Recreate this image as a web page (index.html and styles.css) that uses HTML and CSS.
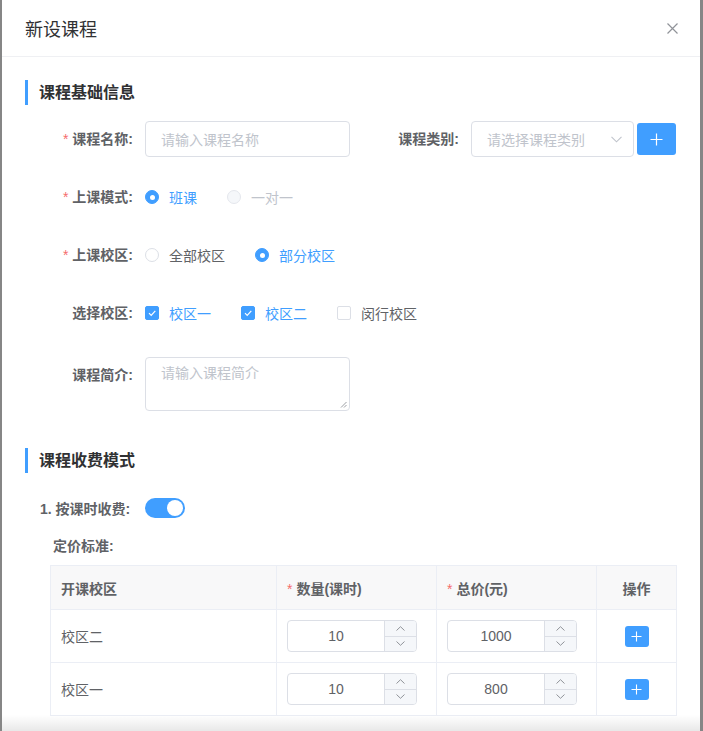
FILE: index.html
```html
<!DOCTYPE html>
<html lang="zh-CN">
<head>
<meta charset="utf-8">
<title>新设课程</title>
<link rel="stylesheet" href="styles.css">
</head>
<body>
<div class="dialog">
  <div class="dialog-header">
    <span class="dialog-title">新设课程</span>
    <span class="close">
      <svg width="11" height="11" viewBox="0 0 11 11"><path d="M0.5 0.5L10.5 10.5M10.5 0.5L0.5 10.5" stroke="#909399" stroke-width="1.2" fill="none"/></svg>
    </span>
  </div>
  <div class="dialog-body">
    <div class="section-title">课程基础信息</div>

    <div class="form-item">
      <label class="form-label required">课程名称:</label>
      <div class="input"><span class="placeholder">请输入课程名称</span></div>
      <label class="form-label form-label--second">课程类别:</label>
      <div class="select">
        <span class="placeholder">请选择课程类别</span>
        <svg class="select-arrow" width="11" height="7" viewBox="0 0 11 7"><path d="M0.5 0.8L5.5 5.8L10.5 0.8" stroke="#C0C4CC" stroke-width="1.1" fill="none"/></svg>
      </div>
      <span class="btn-add">
        <svg width="13" height="13" viewBox="0 0 13 13"><path d="M6.5 0.5V12.5M0.5 6.5H12.5" stroke="#fff" stroke-width="1.2"/></svg>
      </span>
    </div>

    <div class="form-item">
      <label class="form-label required">上课模式:</label>
      <span class="radio is-checked"><span class="radio-dot"></span><span class="radio-text">班课</span></span>
      <span class="radio is-disabled"><span class="radio-dot"></span><span class="radio-text">一对一</span></span>
    </div>

    <div class="form-item">
      <label class="form-label required">上课校区:</label>
      <span class="radio"><span class="radio-dot"></span><span class="radio-text">全部校区</span></span>
      <span class="radio is-checked"><span class="radio-dot"></span><span class="radio-text">部分校区</span></span>
    </div>

    <div class="form-item">
      <label class="form-label">选择校区:</label>
      <span class="checkbox is-checked"><span class="checkbox-box"><svg width="10" height="10" viewBox="0 0 10 10"><path d="M2 5.2L4.2 7.4L8.3 2.8" stroke="#fff" stroke-width="1.2" fill="none"/></svg></span><span class="checkbox-text">校区一</span></span>
      <span class="checkbox is-checked"><span class="checkbox-box"><svg width="10" height="10" viewBox="0 0 10 10"><path d="M2 5.2L4.2 7.4L8.3 2.8" stroke="#fff" stroke-width="1.2" fill="none"/></svg></span><span class="checkbox-text">校区二</span></span>
      <span class="checkbox"><span class="checkbox-box"></span><span class="checkbox-text">闵行校区</span></span>
    </div>

    <div class="form-item form-item--textarea">
      <label class="form-label">课程简介:</label>
      <div class="textarea">
        <span class="placeholder">请输入课程简介</span>
        <svg class="resize" width="7" height="7" viewBox="0 0 7 7"><path d="M6.5 1L1 6.5M6.5 4L4 6.5" stroke="#909399" stroke-width="0.9"/></svg>
      </div>
    </div>

    <div class="section-title section-title--second">课程收费模式</div>

    <div class="fee-row">
      <span class="fee-label">1. 按课时收费:</span>
      <span class="switch"><span class="switch-knob"></span></span>
    </div>

    <div class="price-title">定价标准:</div>

    <table class="price-table">
      <colgroup>
        <col class="col-campus"><col class="col-num"><col class="col-num"><col class="col-op">
      </colgroup>
      <thead>
        <tr>
          <th>开课校区</th>
          <th><span class="star">*</span>数量(课时)</th>
          <th><span class="star">*</span>总价(元)</th>
          <th class="center">操作</th>
        </tr>
      </thead>
      <tbody>
        <tr>
          <td>校区二</td>
          <td>
            <div class="num">
              <span class="num-value">10</span>
              <span class="num-controls">
                <span class="num-btn"><svg width="9" height="5" viewBox="0 0 9 5"><path d="M0.5 4.5L4.5 0.7L8.5 4.5" stroke="#909399" fill="none"/></svg></span>
                <span class="num-btn"><svg width="9" height="5" viewBox="0 0 9 5"><path d="M0.5 0.5L4.5 4.3L8.5 0.5" stroke="#909399" fill="none"/></svg></span>
              </span>
            </div>
          </td>
          <td>
            <div class="num">
              <span class="num-value">1000</span>
              <span class="num-controls">
                <span class="num-btn"><svg width="9" height="5" viewBox="0 0 9 5"><path d="M0.5 4.5L4.5 0.7L8.5 4.5" stroke="#909399" fill="none"/></svg></span>
                <span class="num-btn"><svg width="9" height="5" viewBox="0 0 9 5"><path d="M0.5 0.5L4.5 4.3L8.5 0.5" stroke="#909399" fill="none"/></svg></span>
              </span>
            </div>
          </td>
          <td class="center">
            <span class="btn-mini"><svg width="11" height="11" viewBox="0 0 11 11"><path d="M5.5 0.5V10.5M0.5 5.5H10.5" stroke="#fff" stroke-width="1.1"/></svg></span>
          </td>
        </tr>
        <tr>
          <td>校区一</td>
          <td>
            <div class="num">
              <span class="num-value">10</span>
              <span class="num-controls">
                <span class="num-btn"><svg width="9" height="5" viewBox="0 0 9 5"><path d="M0.5 4.5L4.5 0.7L8.5 4.5" stroke="#909399" fill="none"/></svg></span>
                <span class="num-btn"><svg width="9" height="5" viewBox="0 0 9 5"><path d="M0.5 0.5L4.5 4.3L8.5 0.5" stroke="#909399" fill="none"/></svg></span>
              </span>
            </div>
          </td>
          <td>
            <div class="num">
              <span class="num-value">800</span>
              <span class="num-controls">
                <span class="num-btn"><svg width="9" height="5" viewBox="0 0 9 5"><path d="M0.5 4.5L4.5 0.7L8.5 4.5" stroke="#909399" fill="none"/></svg></span>
                <span class="num-btn"><svg width="9" height="5" viewBox="0 0 9 5"><path d="M0.5 0.5L4.5 4.3L8.5 0.5" stroke="#909399" fill="none"/></svg></span>
              </span>
            </div>
          </td>
          <td class="center">
            <span class="btn-mini"><svg width="11" height="11" viewBox="0 0 11 11"><path d="M5.5 0.5V10.5M0.5 5.5H10.5" stroke="#fff" stroke-width="1.1"/></svg></span>
          </td>
        </tr>
      </tbody>
    </table>
  </div>
  <div class="bottom-fade"></div>
</div>
</body>
</html>
```

FILE: styles.css
```css
* { box-sizing: border-box; }

html, body {
  margin: 0;
  height: 100%;
}

body {
  background: #868686;
  overflow: hidden;
  font-family: "Liberation Sans", "Noto Sans CJK SC", sans-serif;
  font-size: 14px;
  color: #606266;
}

.dialog {
  position: relative;
  margin-left: 2px;
  width: 698px;
  height: 731px;
  background: #fff;
  overflow: hidden;
}

.dialog-header {
  height: 57px;
  border-bottom: 1px solid #EFF0F3;
  display: flex;
  align-items: center;
  justify-content: space-between;
  padding: 0 22px 0 23px;
}

.dialog-title {
  font-size: 18px;
  color: #303133;
}

.close {
  display: flex;
  width: 11px;
  height: 11px;
}

.dialog-body {
  padding-top: 23px;
}

.section-title {
  margin-left: 23px;
  height: 25px;
  line-height: 25px;
  border-left: 3px solid #409EFF;
  padding-left: 11px;
  font-size: 16px;
  font-weight: bold;
  color: #303133;
  margin-bottom: 16px;
}

.section-title--second {
  margin-top: 37px;
  margin-bottom: 17px;
}

.form-item {
  display: flex;
  align-items: center;
  height: 36px;
  margin-bottom: 22px;
}

.form-item--textarea {
  padding-top: 4px;
  height: auto;
  align-items: flex-start;
}

.form-label {
  flex: none;
  width: 143px;
  padding-right: 12px;
  text-align: right;
  line-height: 36px;
  font-weight: bold;
  color: #606266;
}

.form-label.required::before {
  content: "*";
  color: #F56C6C;
  margin-right: 4px;
  font-weight: normal;
}

.form-label--second {
  width: 121px;
}

.placeholder {
  color: #C0C4CC;
}

.input,
.select {
  height: 36px;
  border: 1px solid #DCDFE6;
  border-radius: 4px;
  display: flex;
  align-items: center;
  padding: 0 15px;
}

.input {
  width: 205px;
}

.select {
  width: 163px;
  justify-content: space-between;
  padding-right: 11px;
}

.btn-add {
  margin-left: 3px;
  width: 39px;
  height: 32px;
  border-radius: 3px;
  background: #409EFF;
  display: flex;
  align-items: center;
  justify-content: center;
}

.radio,
.checkbox {
  display: inline-flex;
  align-items: center;
  margin-right: 30px;
}

.radio-dot {
  width: 14px;
  height: 14px;
  border-radius: 50%;
  border: 1px solid #DCDFE6;
  background: #fff;
  display: flex;
  align-items: center;
  justify-content: center;
}

.radio-text,
.checkbox-text {
  padding-left: 10px;
  color: #606266;
}

.radio.is-checked .radio-dot {
  background: #409EFF;
  border-color: #409EFF;
}

.radio.is-checked .radio-dot::after {
  content: "";
  width: 5px;
  height: 5px;
  border-radius: 50%;
  background: #fff;
}

.radio.is-checked .radio-text,
.checkbox.is-checked .checkbox-text {
  color: #409EFF;
}

.radio.is-disabled .radio-dot {
  background: #F5F7FA;
  border-color: #E4E7ED;
}

.radio.is-disabled .radio-text {
  color: #C0C4CC;
}

.checkbox-box {
  width: 14px;
  height: 14px;
  border: 1px solid #DCDFE6;
  border-radius: 2px;
  display: flex;
  align-items: center;
  justify-content: center;
}

.checkbox.is-checked .checkbox-box {
  background: #409EFF;
  border-color: #409EFF;
}

.textarea {
  position: relative;
  width: 205px;
  height: 54px;
  border: 1px solid #DCDFE6;
  border-radius: 4px;
  padding: 5px 15px;
  line-height: 21px;
}

.resize {
  position: absolute;
  right: 2px;
  bottom: 2px;
}

.fee-row {
  display: flex;
  align-items: center;
  height: 36px;
  padding-left: 38px;
  margin-bottom: 10px;
}

.fee-label {
  width: 105px;
  font-weight: bold;
  color: #606266;
}

.switch {
  position: relative;
  width: 40px;
  height: 20px;
  border-radius: 10px;
  background: #409EFF;
}

.switch-knob {
  position: absolute;
  top: 2px;
  left: 22px;
  width: 16px;
  height: 16px;
  border-radius: 50%;
  background: #fff;
}

.price-title {
  padding-left: 51px;
  line-height: 20px;
  font-weight: bold;
  color: #606266;
  margin-bottom: 9px;
}

.price-table {
  margin-left: 48px;
  width: 626px;
  table-layout: fixed;
  border-collapse: collapse;
}

.col-campus { width: 226px; }
.col-num { width: 160px; }
.col-op { width: 80px; }

.price-table th,
.price-table td {
  border: 1px solid #EBEEF5;
  padding: 0 10px;
  text-align: left;
  color: #606266;
}

.price-table th {
  height: 44px;
  background: #F8F8F9;
  font-weight: bold;
}

.price-table td {
  height: 53px;
}

.price-table .center {
  text-align: center;
}

.star {
  color: #F56C6C;
  margin-right: 4px;
  font-weight: normal;
}

.num {
  display: flex;
  width: 130px;
  height: 32px;
  border: 1px solid #DCDFE6;
  border-radius: 4px;
  overflow: hidden;
}

.num-value {
  flex: 1;
  text-align: center;
  line-height: 30px;
  color: #606266;
}

.num-controls {
  width: 32px;
  display: flex;
  flex-direction: column;
  border-left: 1px solid #DCDFE6;
  background: #F5F7FA;
}

.num-btn {
  flex: 1;
  display: flex;
  align-items: center;
  justify-content: center;
}

.num-btn + .num-btn {
  border-top: 1px solid #DCDFE6;
}

.btn-mini {
  display: inline-flex;
  align-items: center;
  justify-content: center;
  width: 24px;
  height: 21px;
  border-radius: 3px;
  background: #409EFF;
  vertical-align: middle;
}

.bottom-fade {
  position: absolute;
  left: 0;
  right: 0;
  bottom: 0;
  height: 16px;
  background: linear-gradient(to bottom, rgba(0, 0, 0, 0), rgba(0, 0, 0, 0.09));
}
```
